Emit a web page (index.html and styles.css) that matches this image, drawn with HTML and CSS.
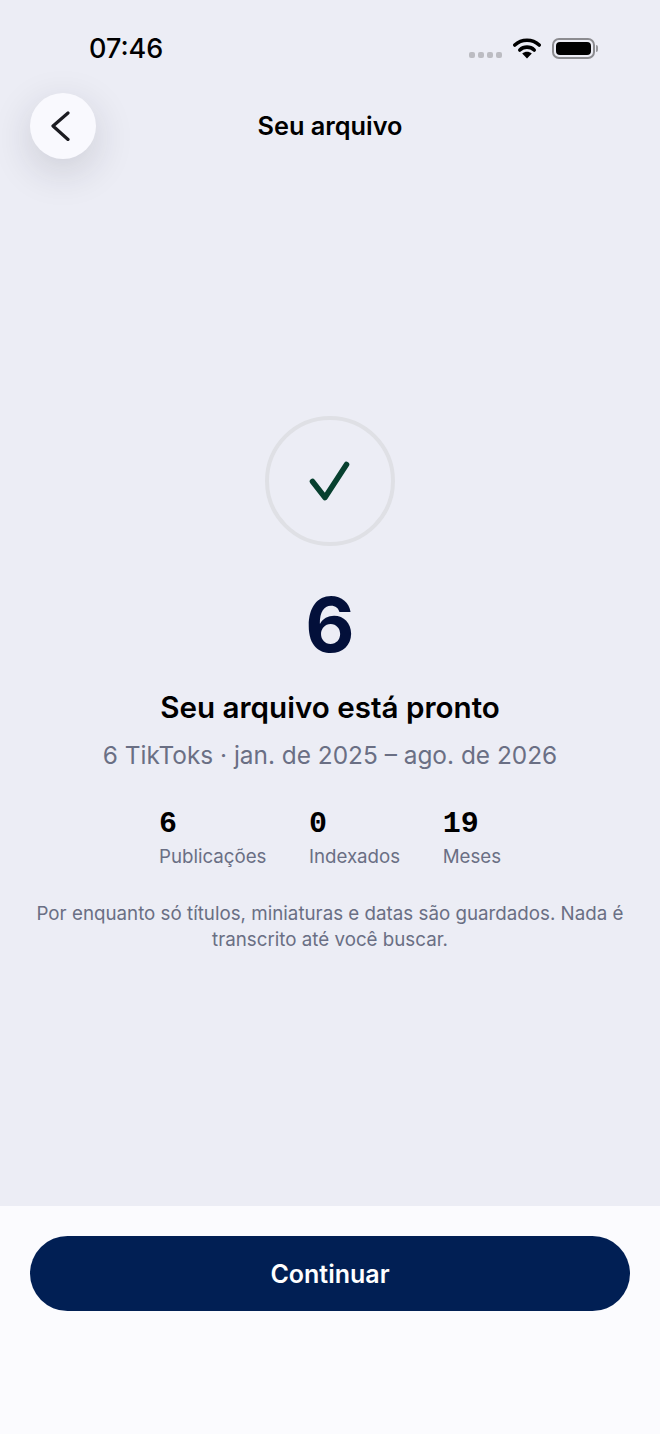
FILE: index.html
```html
<!DOCTYPE html>
<html lang="pt-BR">
<head>
<meta charset="UTF-8">
<meta name="viewport" content="width=device-width, initial-scale=1.0">
<title>Seu arquivo</title>
<link rel="stylesheet" href="styles.css">
</head>
<body>
<div class="screen">
  <div class="status-bar">
    <span class="time">07:46</span>
    <div class="status-icons">
      <div class="signal"><i></i><i></i><i></i><i></i></div>
      <svg class="wifi" width="28" height="22" viewBox="0 0 28 22">
        <path d="M1.800 8C8.600 1.600 19.400 1.600 26.200 8" fill="none" stroke="#000" stroke-width="3.600" stroke-linecap="round"/>
        <path d="M6.800 13C10.900 9.200 17.100 9.200 21.200 13" fill="none" stroke="#000" stroke-width="3.600" stroke-linecap="round"/>
        <path d="M14 21.500L9.200 16.500C12 14.300 16 14.300 18.800 16.500Z" fill="#000"/>
      </svg>
      <div class="battery"><div class="battery-fill"></div></div>
      <div class="battery-cap"></div>
    </div>
  </div>

  <div class="top-bar">
    <button class="back-button">
      <svg width="22" height="30" viewBox="0 0 22 30">
        <path d="M19 2L4 15L19 28.500" fill="none" stroke="#1c1c22" stroke-width="3.200" stroke-linecap="round" stroke-linejoin="round"/>
      </svg>
    </button>
    <div class="top-title">Seu arquivo</div>
  </div>

  <div class="content">
    <div class="check-circle">
      <svg width="44" height="44" viewBox="0 0 44 44">
        <path d="M4.500 22.500L17 38.500L38.500 5.500" fill="none" stroke="#07402f" stroke-width="5.600" stroke-linecap="round" stroke-linejoin="round"/>
      </svg>
    </div>
    <div class="big-number">6</div>
    <div class="headline">Seu arquivo está pronto</div>
    <div class="range">6 TikToks · jan. de 2025 – ago. de 2026</div>

    <div class="stats">
      <div class="stat">
        <div class="stat-value">6</div>
        <div class="stat-label">Publicações</div>
      </div>
      <div class="stat">
        <div class="stat-value">0</div>
        <div class="stat-label">Indexados</div>
      </div>
      <div class="stat">
        <div class="stat-value">19</div>
        <div class="stat-label">Meses</div>
      </div>
    </div>

    <p class="note">Por enquanto só títulos, miniaturas e datas são guardados. Nada é transcrito até você buscar.</p>
  </div>

  <div class="footer">
    <button class="cta-button">Continuar</button>
  </div>
</div>
</body>
</html>
```

FILE: styles.css
```css
body {
  margin: 0;
  font-family: Inter, "Noto Sans", sans-serif;
  background: #ecedf5;
  color: #000;
}
.screen {
  width: 660px;
  height: 1434px;
  display: flex;
  flex-direction: column;
  overflow: hidden;
}
.status-bar {
  height: 93px;
  box-sizing: border-box;
  padding: 32px 62px 0 89px;
  display: flex;
  justify-content: space-between;
  align-items: flex-start;
}
.time {
  font-size: 27px;
  line-height: 33px;
  font-weight: 500;
}
.status-icons {
  display: flex;
  align-items: center;
  height: 33px;
}
.signal {
  display: flex;
  gap: 3px;
  margin-top: 12px;
  margin-right: 11px;
}
.signal i {
  width: 6px;
  height: 6px;
  border-radius: 2px;
  background: #bcbcc2;
}
.wifi {
  margin-right: 11px;
  margin-top: -1px;
}
.battery {
  width: 43px;
  height: 21px;
  box-sizing: border-box;
  border: 2px solid #8c8c90;
  border-radius: 7px;
  padding: 2px;
}
.battery-fill {
  height: 100%;
  background: #000;
  border-radius: 4px;
}
.battery-cap {
  width: 2px;
  height: 7px;
  margin-left: 1px;
  background: #98989c;
  border-radius: 0 2px 2px 0;
}
.top-bar {
  height: 66px;
  padding: 0 30px;
  display: flex;
  align-items: center;
  position: relative;
}
.back-button {
  width: 66px;
  height: 66px;
  padding: 0 6px 0 0;
  border: none;
  border-radius: 50%;
  background: #f9f9fe;
  box-shadow: 0 12px 40px rgba(30, 30, 50, 0.16);
  display: flex;
  align-items: center;
  justify-content: center;
}
.top-title {
  flex: 1;
  text-align: center;
  margin-right: 66px;
  padding-bottom: 2px;
  font-size: 25.300px;
  font-weight: 600;
}
.content {
  flex: 1;
  display: flex;
  flex-direction: column;
  align-items: center;
  padding-top: 257px;
}
.check-circle {
  width: 130px;
  height: 130px;
  box-sizing: border-box;
  border: 4px solid #dfe0e5;
  border-radius: 50%;
  display: flex;
  align-items: center;
  justify-content: center;
}
.big-number {
  margin-top: 28px;
  font-size: 76px;
  line-height: 100px;
  font-weight: 700;
  color: #03103a;
}
.headline {
  margin-top: 15px;
  font-size: 29.600px;
  line-height: 36px;
  font-weight: 600;
}
.range {
  margin-top: 12px;
  font-size: 24.400px;
  line-height: 36px;
  color: #6a6f84;
}
.stats {
  margin-top: 33px;
  display: flex;
  gap: 42.500px;
}
.stat-value {
  font-family: "Liberation Mono", monospace;
  font-size: 30px;
  line-height: 36px;
  font-weight: 700;
}
.stat-label {
  margin-top: 1px;
  font-size: 18.700px;
  line-height: 28px;
  color: #6a6f84;
}
.note {
  margin: 30px 30px 0;
  font-size: 18.750px;
  line-height: 25.500px;
  text-align: center;
  color: #6a6f84;
}
.footer {
  height: 228px;
  box-sizing: border-box;
  padding: 30px 30px 0;
  background: #fbfbfe;
}
.cta-button {
  width: 100%;
  height: 75px;
  border: none;
  border-radius: 38px;
  background: #011f54;
  color: white;
  font-family: inherit;
  font-size: 25px;
  font-weight: 600;
}
```
